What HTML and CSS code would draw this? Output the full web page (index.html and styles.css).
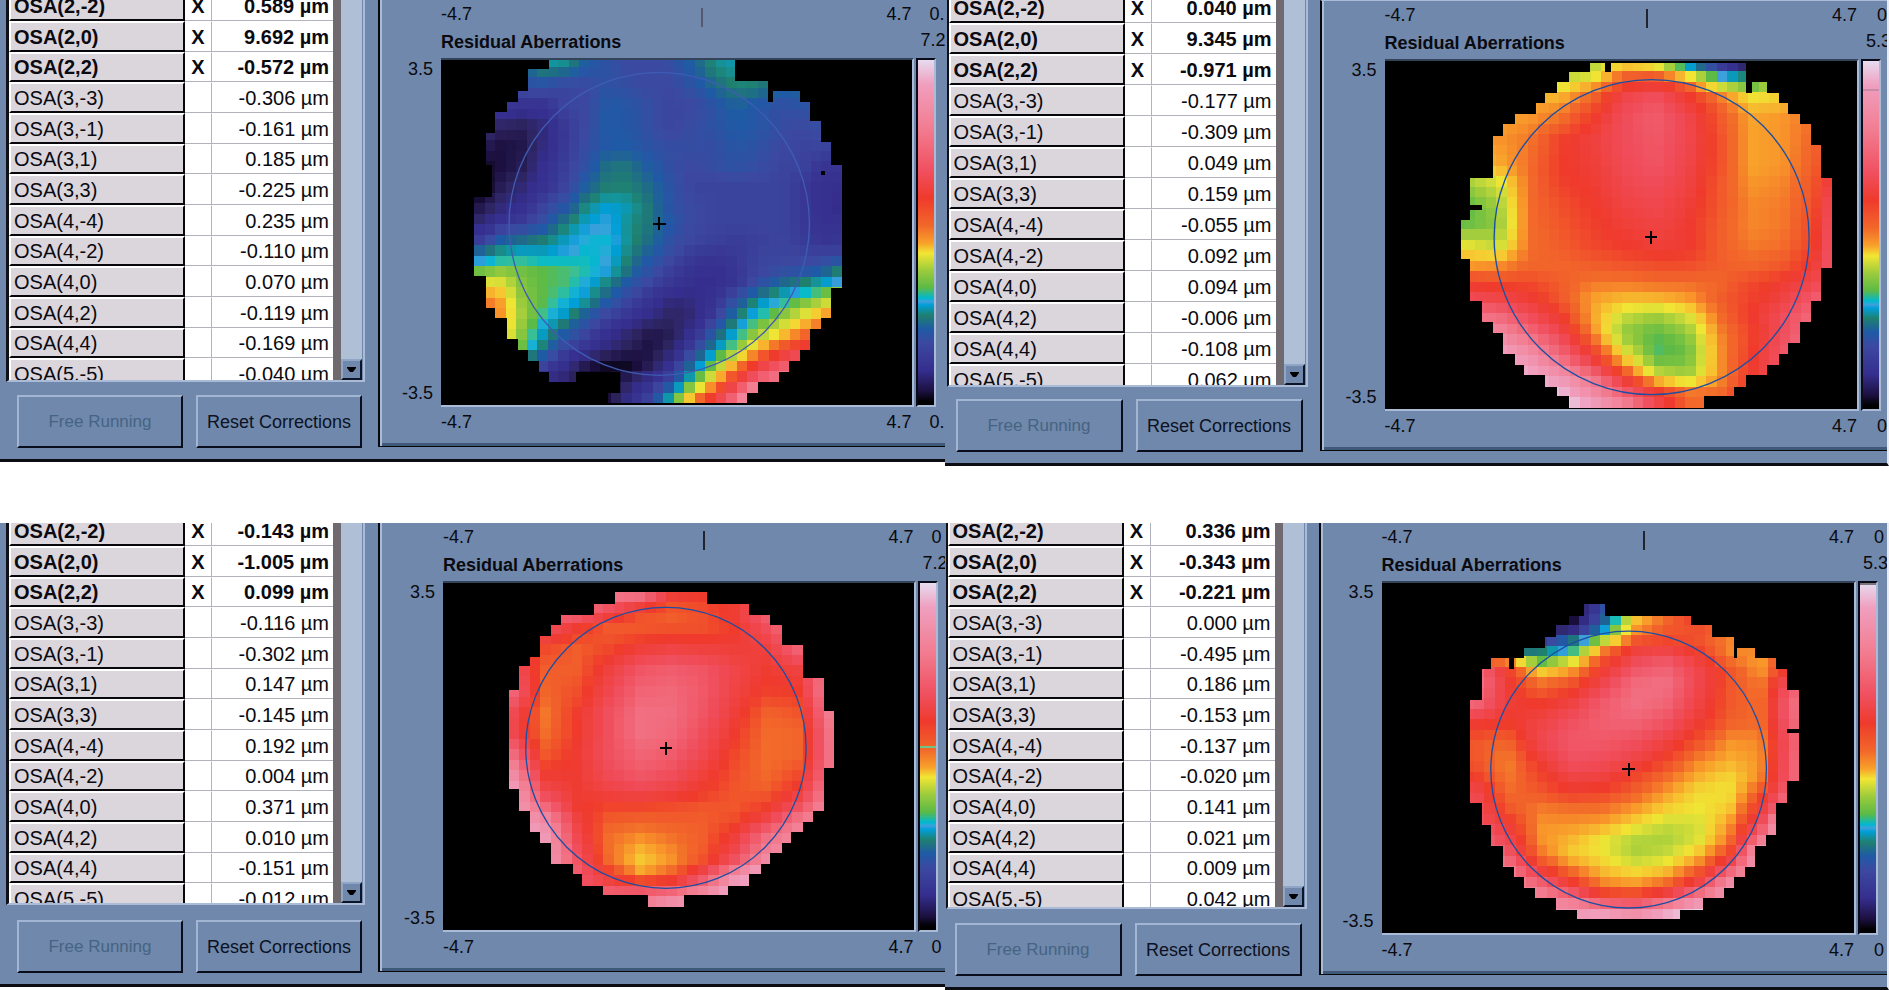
FILE: index.html
```html
<!DOCTYPE html>
<html lang="en">
<head>
<meta charset="utf-8">
<title>Residual Aberrations</title>
<link rel="stylesheet" href="styles.css">
</head>
<body>
<main class="board">
  <section class="panel panel-a">
    <div class="side">
      <div class="list">
        <table class="terms"><tbody>
          <tr class="on"><th scope="row">OSA(2,-2)</th><td class="mark">X</td><td class="val">0.589 µm</td></tr>
          <tr class="on"><th scope="row">OSA(2,0)</th><td class="mark">X</td><td class="val">9.692 µm</td></tr>
          <tr class="on"><th scope="row">OSA(2,2)</th><td class="mark">X</td><td class="val">-0.572 µm</td></tr>
          <tr><th scope="row">OSA(3,-3)</th><td class="mark"></td><td class="val">-0.306 µm</td></tr>
          <tr><th scope="row">OSA(3,-1)</th><td class="mark"></td><td class="val">-0.161 µm</td></tr>
          <tr><th scope="row">OSA(3,1)</th><td class="mark"></td><td class="val">0.185 µm</td></tr>
          <tr><th scope="row">OSA(3,3)</th><td class="mark"></td><td class="val">-0.225 µm</td></tr>
          <tr><th scope="row">OSA(4,-4)</th><td class="mark"></td><td class="val">0.235 µm</td></tr>
          <tr><th scope="row">OSA(4,-2)</th><td class="mark"></td><td class="val">-0.110 µm</td></tr>
          <tr><th scope="row">OSA(4,0)</th><td class="mark"></td><td class="val">0.070 µm</td></tr>
          <tr><th scope="row">OSA(4,2)</th><td class="mark"></td><td class="val">-0.119 µm</td></tr>
          <tr><th scope="row">OSA(4,4)</th><td class="mark"></td><td class="val">-0.169 µm</td></tr>
          <tr><th scope="row">OSA(5,-5)</th><td class="mark"></td><td class="val">-0.040 µm</td></tr>
        </tbody></table>
        <div class="track"><button class="down" aria-label="Scroll down"><svg width="9" height="5" viewBox="0 0 9 5"><path d="M0 0h9v1L6 5H3L0 1z"/></svg></button></div>
      </div>
      <div class="actions"><button class="btn" disabled>Free Running</button><button class="btn">Reset Corrections</button></div>
    </div>
    <div class="plot">
      <div class="axis top"><span>-4.7</span><i class="tick"></i><span>4.7</span></div><span class="zero top">0.</span>
      <h2>Residual Aberrations</h2><span class="max">7.2</span>
      <div class="ylab"><span>3.5</span><span>-3.5</span></div>
      <svg class="map" id="map-a" viewBox="-87 180 1410 1035"></svg>
      <div class="bar"></div>
      <div class="axis"><span>-4.7</span><span>4.7</span></div><span class="zero">0.</span>
    </div>
  </section>

  <section class="panel panel-b">
    <div class="side">
      <div class="list">
        <table class="terms"><tbody>
          <tr class="on"><th scope="row">OSA(2,-2)</th><td class="mark">X</td><td class="val">0.040 µm</td></tr>
          <tr class="on"><th scope="row">OSA(2,0)</th><td class="mark">X</td><td class="val">9.345 µm</td></tr>
          <tr class="on"><th scope="row">OSA(2,2)</th><td class="mark">X</td><td class="val">-0.971 µm</td></tr>
          <tr><th scope="row">OSA(3,-3)</th><td class="mark"></td><td class="val">-0.177 µm</td></tr>
          <tr><th scope="row">OSA(3,-1)</th><td class="mark"></td><td class="val">-0.309 µm</td></tr>
          <tr><th scope="row">OSA(3,1)</th><td class="mark"></td><td class="val">0.049 µm</td></tr>
          <tr><th scope="row">OSA(3,3)</th><td class="mark"></td><td class="val">0.159 µm</td></tr>
          <tr><th scope="row">OSA(4,-4)</th><td class="mark"></td><td class="val">-0.055 µm</td></tr>
          <tr><th scope="row">OSA(4,-2)</th><td class="mark"></td><td class="val">0.092 µm</td></tr>
          <tr><th scope="row">OSA(4,0)</th><td class="mark"></td><td class="val">0.094 µm</td></tr>
          <tr><th scope="row">OSA(4,2)</th><td class="mark"></td><td class="val">-0.006 µm</td></tr>
          <tr><th scope="row">OSA(4,4)</th><td class="mark"></td><td class="val">-0.108 µm</td></tr>
          <tr><th scope="row">OSA(5,-5)</th><td class="mark"></td><td class="val">0.062 µm</td></tr>
        </tbody></table>
        <div class="track"><button class="down" aria-label="Scroll down"><svg width="9" height="5" viewBox="0 0 9 5"><path d="M0 0h9v1L6 5H3L0 1z"/></svg></button></div>
      </div>
      <div class="actions"><button class="btn" disabled>Free Running</button><button class="btn">Reset Corrections</button></div>
    </div>
    <div class="plot">
      <div class="axis top"><span>-4.7</span><i class="tick"></i><span>4.7</span></div><span class="zero top">0</span>
      <h2>Residual Aberrations</h2><span class="max">5.3</span>
      <div class="ylab"><span>3.5</span><span>-3.5</span></div>
      <svg class="map" id="map-b" viewBox="-72 184 1416 1044"></svg>
      <div class="bar"><i class="level level-pink"></i></div>
      <div class="axis"><span>-4.7</span><span>4.7</span></div><span class="zero">0</span>
    </div>
  </section>

  <section class="panel panel-c">
    <div class="side">
      <div class="list">
        <table class="terms"><tbody>
          <tr class="on"><th scope="row">OSA(2,-2)</th><td class="mark">X</td><td class="val">-0.143 µm</td></tr>
          <tr class="on"><th scope="row">OSA(2,0)</th><td class="mark">X</td><td class="val">-1.005 µm</td></tr>
          <tr class="on"><th scope="row">OSA(2,2)</th><td class="mark">X</td><td class="val">0.099 µm</td></tr>
          <tr><th scope="row">OSA(3,-3)</th><td class="mark"></td><td class="val">-0.116 µm</td></tr>
          <tr><th scope="row">OSA(3,-1)</th><td class="mark"></td><td class="val">-0.302 µm</td></tr>
          <tr><th scope="row">OSA(3,1)</th><td class="mark"></td><td class="val">0.147 µm</td></tr>
          <tr><th scope="row">OSA(3,3)</th><td class="mark"></td><td class="val">-0.145 µm</td></tr>
          <tr><th scope="row">OSA(4,-4)</th><td class="mark"></td><td class="val">0.192 µm</td></tr>
          <tr><th scope="row">OSA(4,-2)</th><td class="mark"></td><td class="val">0.004 µm</td></tr>
          <tr><th scope="row">OSA(4,0)</th><td class="mark"></td><td class="val">0.371 µm</td></tr>
          <tr><th scope="row">OSA(4,2)</th><td class="mark"></td><td class="val">0.010 µm</td></tr>
          <tr><th scope="row">OSA(4,4)</th><td class="mark"></td><td class="val">-0.151 µm</td></tr>
          <tr><th scope="row">OSA(5,-5)</th><td class="mark"></td><td class="val">-0.012 µm</td></tr>
        </tbody></table>
        <div class="track"><button class="down" aria-label="Scroll down"><svg width="9" height="5" viewBox="0 0 9 5"><path d="M0 0h9v1L6 5H3L0 1z"/></svg></button></div>
      </div>
      <div class="actions"><button class="btn" disabled>Free Running</button><button class="btn">Reset Corrections</button></div>
    </div>
    <div class="plot">
      <div class="axis top"><span>-4.7</span><i class="tick"></i><span>4.7</span></div><span class="zero top">0</span>
      <h2>Residual Aberrations</h2><span class="max">7.2</span>
      <div class="ylab"><span>3.5</span><span>-3.5</span></div>
      <svg class="map" id="map-c" viewBox="-81 205 1410 1041"></svg>
      <div class="bar"><i class="level level-green"></i></div>
      <div class="axis"><span>-4.7</span><span>4.7</span></div><span class="zero">0</span>
    </div>
  </section>

  <section class="panel panel-d">
    <div class="side">
      <div class="list">
        <table class="terms"><tbody>
          <tr class="on"><th scope="row">OSA(2,-2)</th><td class="mark">X</td><td class="val">0.336 µm</td></tr>
          <tr class="on"><th scope="row">OSA(2,0)</th><td class="mark">X</td><td class="val">-0.343 µm</td></tr>
          <tr class="on"><th scope="row">OSA(2,2)</th><td class="mark">X</td><td class="val">-0.221 µm</td></tr>
          <tr><th scope="row">OSA(3,-3)</th><td class="mark"></td><td class="val">0.000 µm</td></tr>
          <tr><th scope="row">OSA(3,-1)</th><td class="mark"></td><td class="val">-0.495 µm</td></tr>
          <tr><th scope="row">OSA(3,1)</th><td class="mark"></td><td class="val">0.186 µm</td></tr>
          <tr><th scope="row">OSA(3,3)</th><td class="mark"></td><td class="val">-0.153 µm</td></tr>
          <tr><th scope="row">OSA(4,-4)</th><td class="mark"></td><td class="val">-0.137 µm</td></tr>
          <tr><th scope="row">OSA(4,-2)</th><td class="mark"></td><td class="val">-0.020 µm</td></tr>
          <tr><th scope="row">OSA(4,0)</th><td class="mark"></td><td class="val">0.141 µm</td></tr>
          <tr><th scope="row">OSA(4,2)</th><td class="mark"></td><td class="val">0.021 µm</td></tr>
          <tr><th scope="row">OSA(4,4)</th><td class="mark"></td><td class="val">0.009 µm</td></tr>
          <tr><th scope="row">OSA(5,-5)</th><td class="mark"></td><td class="val">0.042 µm</td></tr>
        </tbody></table>
        <div class="track"><button class="down" aria-label="Scroll down"><svg width="9" height="5" viewBox="0 0 9 5"><path d="M0 0h9v1L6 5H3L0 1z"/></svg></button></div>
      </div>
      <div class="actions"><button class="btn" disabled>Free Running</button><button class="btn">Reset Corrections</button></div>
    </div>
    <div class="plot">
      <div class="axis top"><span>-4.7</span><i class="tick"></i><span>4.7</span></div><span class="zero top">0</span>
      <h2>Residual Aberrations</h2><span class="max">5.3</span>
      <div class="ylab"><span>3.5</span><span>-3.5</span></div>
      <svg class="map" id="map-d" viewBox="-81 205 1416 1050"></svg>
      <div class="bar"><i class="level level-grey"></i></div>
      <div class="axis"><span>-4.7</span><span>4.7</span></div><span class="zero">0</span>
    </div>
  </section>
</main>
<script src="maps.js"></script>
</body>
</html>
```
FILE: styles.css
```css
* { box-sizing: border-box; }
body {
  margin: 0;
  background: #fff;
  color: #0a0a10;
  font: 18px/20px "Liberation Sans", Arial, sans-serif;
}
.board {
  display: grid;
  grid-template-columns: 1fr 1fr;
  row-gap: 57px;
  align-items: start;
}
.panel {
  --list: 382px;
  --gap: 13px;
  --pad: 6px;
  --side: 378px;
  display: flex;
  overflow: hidden;
  min-width: 0;
  background: #7088ab;
  border-bottom: 3px solid #0c0c12;
}
.panel-b { --list: 387px; --gap: 12px; --pad: 2px; --side: 375px; border-right: 2px solid #e8ebf2; }
.panel-c { --gap: 15px; }
.panel-d { --list: 386px; --gap: 14px; --pad: 1px; --side: 374px; border-right: 2px solid #e8ebf2; }

.side { width: var(--side); flex: none; padding-left: var(--pad); }
.list {
  display: flex;
  height: var(--list);
  width: 359px;
  overflow: hidden;
  border-left: 3px solid #101018;
  border-right: 2px solid #a9bbd6;
  border-bottom: 2px solid #a9bbd6;
  background: #fff;
}
.panel-b .list, .panel-d .list { width: 361px; border-left-width: 2px; }
.terms {
  flex: 1;
  margin-top: -10px;
  border-spacing: 0;
  table-layout: fixed;
  font-size: 20px;
  line-height: 26px;
  align-self: flex-start;
  border-right: 8px solid #6e6a70;
}
.panel-b .terms, .panel-c .terms, .panel-d .terms { margin-top: -8px; }
.terms th, .terms td { height: 31px; padding: 0; font-weight: 400; white-space: nowrap; }
.terms tr:nth-child(3n) th, .terms tr:nth-child(3n) td { height: 30px; }
.panel-b .terms tr:nth-child(3n) th, .panel-b .terms tr:nth-child(3n) td { height: 31px; }
.terms .on th, .terms .on td { font-weight: 700; }
.terms th {
  width: 176px;
  text-align: left;
  padding-left: 3px;
  background: #dbd5dc;
  border-left: 2px solid #fff;
  border-top: 2px solid #fff;
  border-right: 2px solid #08080c;
  border-bottom: 2px solid #08080c;
}
.terms td { border-bottom: 1px solid #b2b2bc; border-top: 1px solid #fff; }
.terms .mark { width: 27px; text-align: center; border-right: 1px solid #b2b2bc; }
.terms .val { text-align: right; padding-right: 4px; }
.track {
  width: 22px;
  flex: none;
  display: flex;
  align-items: flex-end;
  background: #afbfd6;
  border-right: 1px solid #7088ab;
}
.down {
  width: 21px;
  height: 21px;
  padding: 0;
  display: grid;
  place-items: center;
  background: #7088ab;
  border: 2px solid;
  border-color: #8fa6c6 #0c1428 #0c1428 #8fa6c6;
}
.actions {
  display: grid;
  grid-template-columns: 166px 166px;
  gap: 13px;
  padding: var(--gap) 0 11px 11px;
}
.panel-b .actions, .panel-d .actions { padding-left: 9px; grid-template-columns: 167px 167px; }
.btn {
  height: 53px;
  padding: 0;
  background: #7088ab;
  color: #0c1224;
  font: 18px/20px "Liberation Sans", Arial, sans-serif;
  white-space: nowrap;
  border: 2px solid;
  border-color: #a2b6d4 #0a0e1c #0a0e1c #a2b6d4;
}
.btn:disabled { color: #456483; font-size: 17px; }

.plot {
  flex: 1;
  min-width: 0;
  margin-bottom: 12px;
  display: grid;
  grid-template-columns: 59px 1fr 31px;
  grid-template-rows: 28px 30px auto 1fr;
  border-left: 2px solid #08080c;
  border-bottom: 1px solid #08080c;
  box-shadow: inset 2px 0 #a9bbd6, inset 0 -3px #3f5a78;
  padding-left: 2px;
}
.panel-b .plot { grid-template-columns: 61px 1fr 28px; border-top: 1px solid #a9bbd6; }
.panel-c .plot { grid-template-columns: 61px 1fr 29px; }
.axis { grid-column: 2; display: flex; justify-content: space-between; padding: 5px 2px 0 0; }
.tick { width: 2px; height: 19px; margin: 4px 0 0 46px; background: #20242c; }
.panel-a .tick { background: #535a72; }
.zero { grid-column: 3; padding: 5px 0 0 16px; }
.panel-b .zero, .panel-d .zero { padding-left: 18px; }
.axis.top, .zero.top { padding-top: 4px; }
.plot h2 { grid-column: 2; margin: 0; padding-top: 4px; font-size: 18px; line-height: 20px; }
.max { grid-column: 3; padding: 2px 0 0 7px; white-space: nowrap; }
.ylab {
  display: flex;
  flex-direction: column;
  justify-content: space-between;
  align-items: flex-end;
  padding: 1px 8px 4px 0;
}
.map {
  display: block;
  width: 100%;
  background: #000;
  border-top: 2px solid #33435a;
  border-bottom: 2px solid #a9bbd6;
  border-right: 2px solid #a9bbd6;
}
.bar {
  position: relative;
  width: 20px;
  margin-left: 2px;
  border: 2px solid #0a0a18;
  border-right-color: #a9bbd6;
  border-bottom-color: #a9bbd6;
  background: linear-gradient(#e6dcf0 0, #f09fbf 7%, #f27c90 20%, #f05060 32%, #ef3a2c 40%, #f2672a 48%, #f8a02a 53%, #f2e634 56%, #9ccb3c 61%, #5cba46 66%, #00b8d0 69%, #3f9fdc 70%, #009fd8 71%, #1f8070 74%, #1f5aa6 78%, #3c49a0 82%, #352e8e 90%, #1c1040 96%, #000 99%);
}
.level { position: absolute; left: 0; right: 0; height: 2px; }
.level-pink { top: 8%; background: #c98aa6; }
.level-green { top: 47%; background: #6cc486; }
.level-grey { top: 0; background: #77747c; }
```
FILE: maps.js
```js
// Colour scale: level (0-100) to RGB.
const SCALE = [
  [0, 0, 0, 0], [4, 28, 16, 64], [7, 45, 37, 96], [11, 53, 46, 142], [14, 56, 53, 146],
  [18, 60, 73, 160], [22, 31, 90, 166], [24, 31, 104, 140], [26, 31, 128, 112],
  [27.5, 20, 148, 156], [29, 0, 159, 216], [30, 63, 159, 220], [31, 0, 186, 208],
  [32.5, 62, 191, 144], [34, 92, 186, 70], [38, 156, 203, 60], [41, 197, 217, 58],
  [44, 240, 229, 52], [47, 247, 192, 48], [50, 248, 149, 42], [53, 242, 108, 42],
  [60, 239, 58, 44], [68, 240, 76, 90], [80, 242, 124, 144], [93, 240, 160, 192],
  [100, 230, 222, 242]
];

function colour(v) {
  let i = 1;
  while (i < SCALE.length - 1 && SCALE[i][0] < v) i++;
  const a = SCALE[i - 1], b = SCALE[i];
  const t = Math.max(0, Math.min(1, (v - a[0]) / (b[0] - a[0])));
  return `rgb(${[1, 2, 3].map(k => Math.round(a[k] + (b[k] - a[k]) * t)).join()})`;
}

// rows: [y, levels...]; spans: [top, bottom, left, right]; holes: [x, y, w, h].
const MAPS = {
  "map-a": {
    x0: 30, dx: 64, ex: 1115, ey: 1208, pitch: 31.5, ring: [567, 671, 450, 454, "#3f5cb4"], cross: [567, 670],
    rows: [
      [195, 20, 22, 24, 28, 27, 22, 20, 18, 18, 19, 23, 27, 28, 26, 24, 24, 20, 18],
      [260, 16, 17, 19, 19, 17, 18, 20, 19, 18, 18, 20, 24, 26, 26, 23, 24, 20, 18],
      [320, 14, 14, 13, 13, 17, 18, 22, 21, 19, 17, 18, 20, 23, 21, 19, 20, 20, 18],
      [380, 10, 7, 6, 9, 15, 18, 22, 21, 19, 17, 19, 20, 22, 21, 19, 18, 19, 18],
      [440, 6, 4, 5, 10, 15, 19, 22, 22, 20, 19, 19, 19, 21, 20, 18, 17, 17, 16],
      [500, 2, 4, 6, 12, 16, 20, 25, 25, 22, 19, 18, 19, 20, 19, 17, 17, 14, 14],
      [560, 1, 6, 9, 13, 17, 23, 26, 26, 24, 20, 17, 17, 17, 17, 17, 15, 12, 11],
      [620, 5, 9, 12, 17, 21, 27, 29, 28, 25, 20, 18, 17, 17, 17, 17, 15, 12, 10],
      [670, 9, 14, 16, 20, 26, 29, 30, 27, 25, 21, 18, 17, 17, 17, 17, 15, 13, 12],
      [730, 17, 24, 26, 27, 29, 31, 31, 27, 24, 19, 17, 16, 15, 16, 17, 16, 14, 15],
      [765, 27, 29, 30, 29, 30, 31, 30, 26, 22, 18, 15, 14, 15, 17, 17, 17, 17, 17],
      [805, 33, 36, 35, 34, 33, 32, 30, 25, 20, 16, 13, 12, 14, 17, 18, 19, 21, 26],
      [850, 44, 43, 36, 34, 33, 30, 26, 21, 17, 14, 11, 11, 14, 19, 24, 26, 29, 31],
      [900, 54, 49, 37, 34, 31, 28, 22, 17, 13, 9, 10, 13, 20, 27, 30, 34, 38, 45],
      [945, 54, 50, 38, 32, 28, 22, 17, 14, 10, 7, 9, 15, 25, 31, 36, 42, 49, 54],
      [1000, 50, 48, 36, 28, 22, 17, 12, 8, 5, 6, 12, 22, 30, 38, 45, 52, 58, 60],
      [1045, 48, 44, 34, 25, 17, 13, 9, 6, 4, 8, 17, 27, 36, 48, 57, 62, 66, 68],
      [1095, 20, 20, 20, 17, 11, 5, 2, 2, 6, 13, 25, 36, 50, 62, 70, 76, 78, 80],
      [1140, 8, 8, 8, 10, 8, 3, 2, 7, 12, 18, 32, 47, 62, 74, 80, 84, 86, 86],
      [1190, 1, 1, 1, 1, 1, 1, 4, 11, 17, 30, 50, 62, 76, 99, 99, 99, 99, 99]
    ],
    spans: [
      [180, 207, 237, 795], [207, 243, 174, 795], [243, 273, 174, 893], [273, 306, 144, 990],
      [306, 336, 111, 1020], [336, 363, 75, 1020], [363, 399, 75, 1052], [399, 426, 48, 1052],
      [426, 495, 48, 1083], [495, 590, 66, 1115], [590, 827, 12, 1115], [827, 862, 48, 1115],
      [862, 924, 48, 1083], [924, 954, 75, 1083], [954, 987, 111, 1052], [987, 1017, 111, 1020],
      [1017, 1050, 144, 1020], [1050, 1082, 174, 990], [1082, 1114, 207, 957],
      [1114, 1145, 237, 927], [1145, 1177, 450, 863], [1177, 1208, 414, 830]
    ],
    holes: [[893, 273, 16, 33], [1053, 513, 12, 12], [318, 1114, 132, 31]]
  },
  "map-b": {
    x0: 170, dx: 95, ex: 1269, ey: 1223, pitch: 31.5, ring: [727, 712, 472, 472, "#1c4fa4"], cross: [725, 712],
    rows: [
      [200, 40, 40, 40, 40, 40, 47, 45, 30, 16, 6, 10, 10, 10],
      [232, 40, 40, 40, 40, 43, 55, 56, 46, 31, 26, 40, 45, 50],
      [265, 45, 45, 45, 44, 50, 60, 63, 56, 43, 36, 42, 50, 52],
      [300, 46, 46, 48, 49, 55, 66, 70, 62, 54, 46, 47, 50, 53],
      [360, 49, 49, 50, 53, 60, 68, 72, 66, 56, 49, 50, 53, 56],
      [420, 50, 50, 52, 59, 63, 68, 71, 66, 57, 49, 50, 54, 60],
      [500, 47, 48, 53, 60, 62, 67, 70, 65, 57, 49, 50, 55, 64],
      [550, 38, 42, 53, 59, 61, 66, 68, 64, 56, 50, 51, 56, 72],
      [620, 34, 38, 53, 57, 60, 64, 66, 62, 56, 51, 52, 57, 78],
      [680, 35, 37, 53, 56, 59, 62, 64, 61, 55, 51, 52, 58, 80],
      [740, 44, 41, 53, 55, 58, 60, 62, 61, 55, 52, 53, 59, 80],
      [800, 50, 51, 54, 54, 55, 56, 57, 57, 55, 54, 56, 62, 78],
      [850, 60, 58, 58, 55, 52, 52, 53, 53, 54, 58, 61, 66, 76],
      [900, 68, 66, 62, 56, 49, 47, 47, 49, 55, 59, 64, 72, 78],
      [950, 78, 76, 68, 60, 49, 41, 38, 42, 53, 60, 68, 76, 80],
      [1000, 84, 85, 76, 66, 51, 37, 34, 37, 51, 58, 68, 78, 80],
      [1045, 90, 92, 84, 72, 58, 42, 33, 35, 50, 59, 70, 80, 80],
      [1095, 94, 96, 92, 80, 66, 50, 36, 36, 50, 60, 70, 80, 80],
      [1130, 97, 97, 95, 90, 78, 60, 44, 39, 50, 60, 70, 80, 80],
      [1175, 99, 99, 99, 96, 85, 72, 60, 52, 53, 62, 70, 70, 70],
      [1210, 99, 99, 99, 100, 92, 82, 66, 54, 53, 55, 60, 60, 60]
    ],
    spans: [
      [189, 216, 543, 1010], [216, 246, 480, 1010], [246, 279, 444, 1074], [279, 309, 408, 1109],
      [309, 342, 381, 1137], [342, 372, 318, 1173], [372, 408, 282, 1206], [408, 435, 252, 1206],
      [435, 534, 252, 1236], [534, 660, 184, 1269], [660, 777, 157, 1269], [777, 803, 184, 1269],
      [803, 903, 184, 1236], [903, 966, 219, 1206], [966, 998, 252, 1173], [998, 1028, 282, 1173],
      [1028, 1062, 282, 1137], [1062, 1095, 318, 1109], [1095, 1125, 345, 1074],
      [1125, 1160, 408, 1010], [1160, 1188, 444, 975], [1188, 1223, 480, 885]
    ],
    holes: [[588, 189, 18, 27], [1010, 246, 17, 33], [184, 615, 35, 15]]
  },
  "map-c": {
    x0: 130, dx: 95, ex: 1092, ey: 1176, pitch: 31.5, ring: [587, 699, 420, 421, "#1c4fa4"], cross: [587, 700],
    rows: [
      [250, 78, 78, 78, 78, 76, 62, 60, 60, 66, 75, 80],
      [290, 76, 76, 76, 66, 57, 54, 57, 62, 74, 78, 80],
      [345, 72, 68, 60, 55, 56, 57, 57, 60, 68, 80, 86],
      [400, 66, 58, 55, 58, 62, 64, 63, 62, 63, 74, 86],
      [460, 70, 55, 55, 63, 70, 72, 70, 65, 61, 64, 80],
      [530, 74, 54, 57, 66, 74, 75, 71, 64, 59, 60, 84],
      [600, 66, 52, 60, 69, 77, 76, 70, 62, 54, 56, 80],
      [660, 66, 53, 60, 69, 77, 75, 68, 60, 53, 54, 78],
      [720, 76, 56, 61, 69, 74, 72, 66, 58, 53, 54, 78],
      [770, 84, 60, 61, 68, 72, 69, 63, 57, 53, 57, 78],
      [830, 92, 66, 61, 64, 66, 64, 60, 56, 55, 62, 82],
      [880, 93, 76, 61, 58, 58, 57, 56, 56, 60, 70, 86],
      [920, 96, 86, 64, 55, 54, 55, 55, 58, 66, 80, 86],
      [960, 96, 90, 66, 53, 51, 53, 55, 62, 76, 84, 88],
      [1030, 95, 93, 70, 53, 46, 50, 56, 68, 84, 90, 92],
      [1075, 90, 85, 72, 60, 49, 54, 66, 84, 97, 98, 98],
      [1110, 80, 80, 70, 66, 62, 64, 76, 94, 99, 99, 99],
      [1150, 80, 80, 80, 78, 80, 86, 90, 99, 99, 99, 99]
    ],
    spans: [
      [231, 267, 435, 711], [267, 300, 372, 837], [300, 330, 273, 900], [330, 363, 243, 936],
      [363, 390, 210, 936], [390, 427, 210, 999], [427, 453, 180, 999], [453, 489, 147, 999],
      [489, 525, 147, 1062], [525, 588, 117, 1062], [588, 759, 117, 1092], [759, 822, 117, 1062],
      [822, 887, 147, 1062], [887, 920, 180, 1029], [920, 950, 180, 999], [950, 983, 210, 963],
      [983, 1013, 243, 936], [1013, 1046, 243, 900], [1046, 1077, 309, 873],
      [1077, 1112, 336, 837], [1112, 1140, 399, 774], [1140, 1176, 534, 642]
    ],
    holes: []
  },
  "map-d": {
    x0: 200, dx: 95, ex: 1170, ey: 1212, pitch: 31.5, ring: [658, 764, 413, 415, "#1c4fa4"], cross: [658, 763],
    rows: [
      [285, 10, 10, 10, 3, 18, 44, 53, 60, 55, 55, 55],
      [320, 10, 10, 10, 2, 22, 47, 54, 60, 55, 53, 53],
      [348, 10, 10, 8, 9, 28, 50, 56, 57, 53, 51, 55],
      [382, 18, 18, 16, 26, 41, 57, 59, 57, 51, 50, 56],
      [413, 26, 26, 27, 32, 53, 64, 66, 60, 51, 51, 58],
      [445, 60, 58, 35, 44, 58, 68, 72, 64, 54, 49, 62],
      [477, 80, 60, 48, 51, 62, 72, 75, 66, 57, 50, 66],
      [510, 78, 62, 53, 57, 66, 76, 77, 66, 56, 52, 72],
      [570, 74, 62, 60, 64, 72, 77, 74, 64, 56, 53, 76],
      [620, 62, 60, 64, 69, 73, 74, 70, 62, 55, 53, 75],
      [680, 56, 54, 66, 71, 71, 69, 64, 57, 50, 51, 72],
      [740, 56, 51, 61, 69, 68, 64, 58, 51, 48, 50, 74],
      [790, 60, 52, 58, 64, 63, 58, 53, 48, 45, 51, 74],
      [830, 66, 53, 56, 60, 59, 55, 50, 45, 44, 56, 76],
      [880, 68, 56, 52, 53, 53, 50, 46, 44, 46, 62, 84],
      [930, 70, 62, 50, 50, 49, 45, 41, 42, 50, 68, 110],
      [970, 74, 66, 50, 48, 44, 40, 39, 42, 52, 78, 98],
      [1020, 80, 72, 53, 46, 44, 39, 41, 47, 58, 95, 98],
      [1060, 84, 80, 60, 52, 47, 44, 46, 53, 70, 92, 98],
      [1090, 84, 84, 70, 57, 49, 47, 50, 60, 82, 94, 98],
      [1120, 84, 84, 78, 66, 54, 52, 57, 68, 88, 94, 98],
      [1150, 84, 84, 84, 78, 64, 62, 70, 84, 92, 94, 98],
      [1190, 90, 90, 90, 90, 92, 86, 94, 99, 99, 99, 99]
    ],
    spans: [
      [267, 303, 525, 588], [303, 330, 478, 846], [330, 366, 441, 909], [366, 399, 408, 974],
      [399, 429, 345, 1038], [429, 462, 246, 1101], [462, 526, 219, 1134], [526, 555, 219, 1170],
      [555, 798, 183, 1170], [798, 865, 183, 1134], [865, 929, 219, 1101], [929, 960, 246, 1101],
      [960, 992, 246, 1071], [992, 1055, 282, 1038], [1055, 1086, 315, 1008],
      [1086, 1120, 345, 974], [1120, 1148, 378, 945], [1148, 1185, 441, 882], [1185, 1212, 504, 813]
    ],
    holes: [[974, 399, 10, 30], [300, 429, 15, 33], [1134, 642, 36, 12]]
  }
};

function level(map, x, y) {
  const rows = map.rows;
  let r = 1;
  while (r < rows.length - 1 && rows[r][0] < y) r++;
  const a = rows[r - 1], b = rows[r];
  const ty = Math.max(0, Math.min(1, (y - a[0]) / (b[0] - a[0])));
  const last = a.length - 2;
  const fx = Math.max(0, Math.min(last - 0.001, (x - map.x0) / map.dx));
  const i = Math.floor(fx), tx = fx - i;
  const mix = row => row[i + 1] + (row[i + 2] - row[i + 1]) * tx;
  return mix(a) * (1 - ty) + mix(b) * ty;
}

function draw(id, map) {
  const p = map.pitch;
  let out = '<g shape-rendering="crispEdges">';
  const rect = (x, y, w, h, fill) => { out += `<rect x="${x}" y="${y}" width="${w}" height="${h}" fill="${fill}"/>`; };
  for (const [top, bottom, left, right] of map.spans) {
    for (let j = Math.ceil((map.ey - top) / p); map.ey - j * p < bottom; j--) {
      const cy = map.ey - j * p, y1 = Math.max(cy, top), y2 = Math.min(cy + p, bottom);
      if (y2 <= y1) continue;
      for (let i = Math.ceil((map.ex - left) / p); map.ex - i * p < right; i--) {
        const cx = map.ex - i * p, x1 = Math.max(cx, left), x2 = Math.min(cx + p, right);
        if (x2 <= x1) continue;
        rect(x1, y1, x2 - x1, y2 - y1, colour(level(map, cx + p / 2, cy + p / 2)));
      }
    }
  }
  for (const [x, y, w, h] of map.holes) rect(x, y, w, h, "#000");
  const [cx, cy] = map.cross;
  rect(cx - 19, cy - 3, 38, 6, "#000");
  rect(cx - 3, cy - 19, 6, 38, "#000");
  const [x, y, rx, ry, stroke] = map.ring;
  out += `</g><ellipse cx="${x}" cy="${y}" rx="${rx}" ry="${ry}" fill="none" stroke="${stroke}" stroke-width="4"/>`;
  document.getElementById(id).innerHTML = out;
}

for (const id in MAPS) draw(id, MAPS[id]);
```
